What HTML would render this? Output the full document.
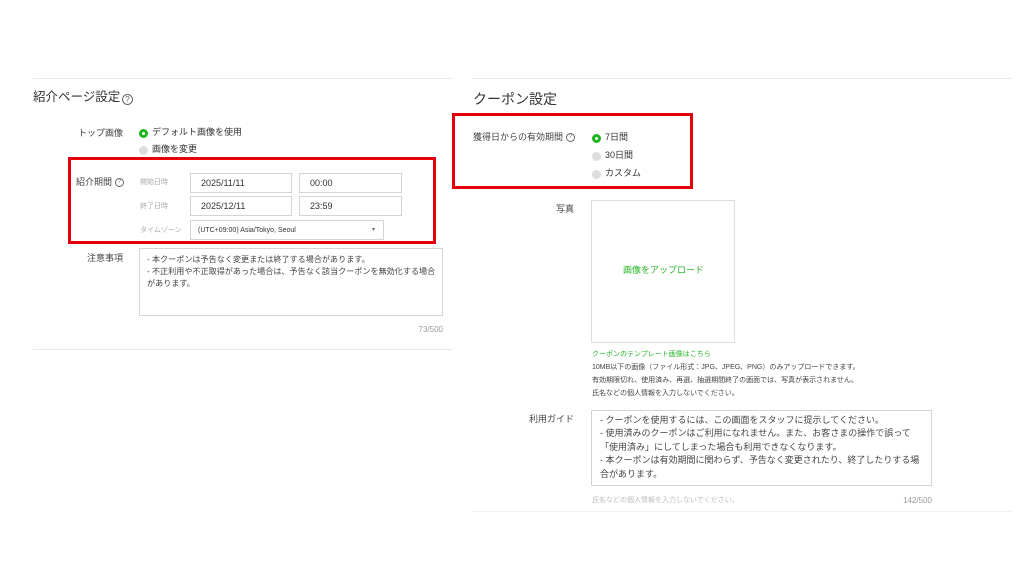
<!DOCTYPE html><html><head><meta charset="utf-8"><style>
body{margin:0;width:1024px;height:571px;background:#fff;position:relative;overflow:hidden;font-family:"Liberation Sans","Noto Sans CJK JP",sans-serif;color:#333}
div,span{position:absolute;box-sizing:border-box}
.t{white-space:nowrap;line-height:1}
.line{height:1px;background:#e8e8e8}
.red{border:3px solid #e3000b}
.inp{border:1px solid #d4d4d4;background:#fff;font-size:9px;color:#333;padding-left:10px;display:flex;align-items:center}
.rb{width:9px;height:9px;border-radius:50%;background:#ddd}
.ron{width:9px;height:9px;border-radius:50%;border:3px solid #1db41d;background:#fff}
.q{width:10px;height:10px;border:1px solid #666;border-radius:50%;font-size:7px;text-align:center;line-height:8px;color:#666}
.lbl{font-size:9px;color:#444;text-align:right}
.sm{font-size:7px;color:#aaa}
</style></head><body>
<div class="line" style="left:33px;top:78px;width:420px"></div>
<div class="line" style="left:472px;top:78px;width:540px"></div>
<div class="line" style="left:33px;top:349px;width:420px"></div>
<div class="t" style="left:33px;top:91px;font-size:12.5px;color:#333">紹介ページ設定</div>
<div class="q" style="left:122px;top:94px;width:11px;height:11px;line-height:9px;font-size:8px">?</div>
<div class="t lbl" style="right:901px;top:129px">トップ画像</div>
<div class="ron" style="left:139px;top:129px"></div>
<div class="t" style="left:152px;top:128px;font-size:9px">デフォルト画像を使用</div>
<div class="rb" style="left:139px;top:146px"></div>
<div class="t" style="left:152px;top:145px;font-size:9px">画像を変更</div>
<div class="red" style="left:68px;top:157px;width:368px;height:87px"></div>
<div class="t lbl" style="right:912px;top:178px">紹介期間</div>
<div class="q" style="left:115px;top:178px;width:9px;height:9px;line-height:7px;font-size:6px">?</div>
<div class="t sm" style="left:140px;top:179px">開始日時</div>
<div class="t sm" style="left:140px;top:203px">終了日時</div>
<div class="t sm" style="left:140px;top:227px">タイムゾーン</div>
<div class="inp" style="left:190px;top:173px;width:102px;height:20px">2025/11/11</div>
<div class="inp" style="left:299px;top:173px;width:103px;height:20px">00:00</div>
<div class="inp" style="left:190px;top:196px;width:102px;height:20px">2025/12/11</div>
<div class="inp" style="left:299px;top:196px;width:103px;height:20px">23:59</div>
<div class="inp" style="left:190px;top:220px;width:194px;height:20px;font-size:7px;padding-left:7px">(UTC+09:00) Asia/Tokyo, Seoul<span style="right:8px;top:5px;font-size:6px;color:#666">▾</span></div>
<div class="t lbl" style="right:901px;top:254px">注意事項</div>
<div style="left:139px;top:248px;width:304px;height:68px;border:1px solid #d4d4d4;font-size:8.1px;line-height:12px;padding:5px 7px;color:#444;white-space:nowrap">- 本クーポンは予告なく変更または終了する場合があります。<br>- 不正利用や不正取得があった場合は、予告なく該当クーポンを無効化する場合<br>があります。</div>
<div class="t" style="right:581px;top:326px;font-size:8px;color:#999">73/500</div>

<div class="t" style="left:473px;top:92px;font-size:14px;color:#333">クーポン設定</div>
<div class="red" style="left:452px;top:113px;width:241px;height:76px"></div>
<div class="t" style="left:473px;top:133px;font-size:9px;color:#444">獲得日からの有効期間</div>
<div class="q" style="left:566px;top:133px;width:9px;height:9px;line-height:7px;font-size:6px">?</div>
<div class="ron" style="left:592px;top:134px"></div>
<div class="t" style="left:605px;top:133px;font-size:9px">7日間</div>
<div class="rb" style="left:592px;top:152px"></div>
<div class="t" style="left:605px;top:151px;font-size:9px">30日間</div>
<div class="rb" style="left:592px;top:170px"></div>
<div class="t" style="left:605px;top:169px;font-size:9px">カスタム</div>
<div class="t lbl" style="right:450px;top:205px">写真</div>
<div style="left:591px;top:200px;width:144px;height:143px;border:1px solid #ddd"></div>
<div class="t" style="left:623px;top:266px;font-size:9px;color:#28b428">画像をアップロード</div>
<div class="t" style="left:592px;top:351px;font-size:7px;color:#28b428">クーポンのテンプレート画像はこちら</div>
<div class="t" style="left:592px;top:364px;font-size:7px;color:#444">10MB以下の画像（ファイル形式：JPG、JPEG、PNG）のみアップロードできます。</div>
<div class="t" style="left:592px;top:377px;font-size:7px;color:#444">有効期限切れ、使用済み、再選、抽選期間終了の画面では、写真が表示されません。</div>
<div class="t" style="left:592px;top:390px;font-size:7px;color:#444">氏名などの個人情報を入力しないでください。</div>
<div class="t lbl" style="right:450px;top:415px">利用ガイド</div>
<div style="left:591px;top:410px;width:341px;height:76px;border:1px solid #d4d4d4;font-size:9px;line-height:13.4px;padding:3px 8px;color:#444;white-space:nowrap">- クーポンを使用するには、この画面をスタッフに提示してください。<br>- 使用済みのクーポンはご利用になれません。また、お客さまの操作で誤って<br>「使用済み」にしてしまった場合も利用できなくなります。<br>- 本クーポンは有効期間に関わらず、予告なく変更されたり、終了したりする場<br>合があります。</div>
<div class="t" style="left:592px;top:497px;font-size:7px;color:#bbb">氏名などの個人情報を入力しないでください。</div>
<div class="t" style="right:92px;top:497px;font-size:8px;color:#999">142/500</div>
<div class="line" style="left:472px;top:511px;width:540px;background:#f2f2f2"></div>
</body></html>
